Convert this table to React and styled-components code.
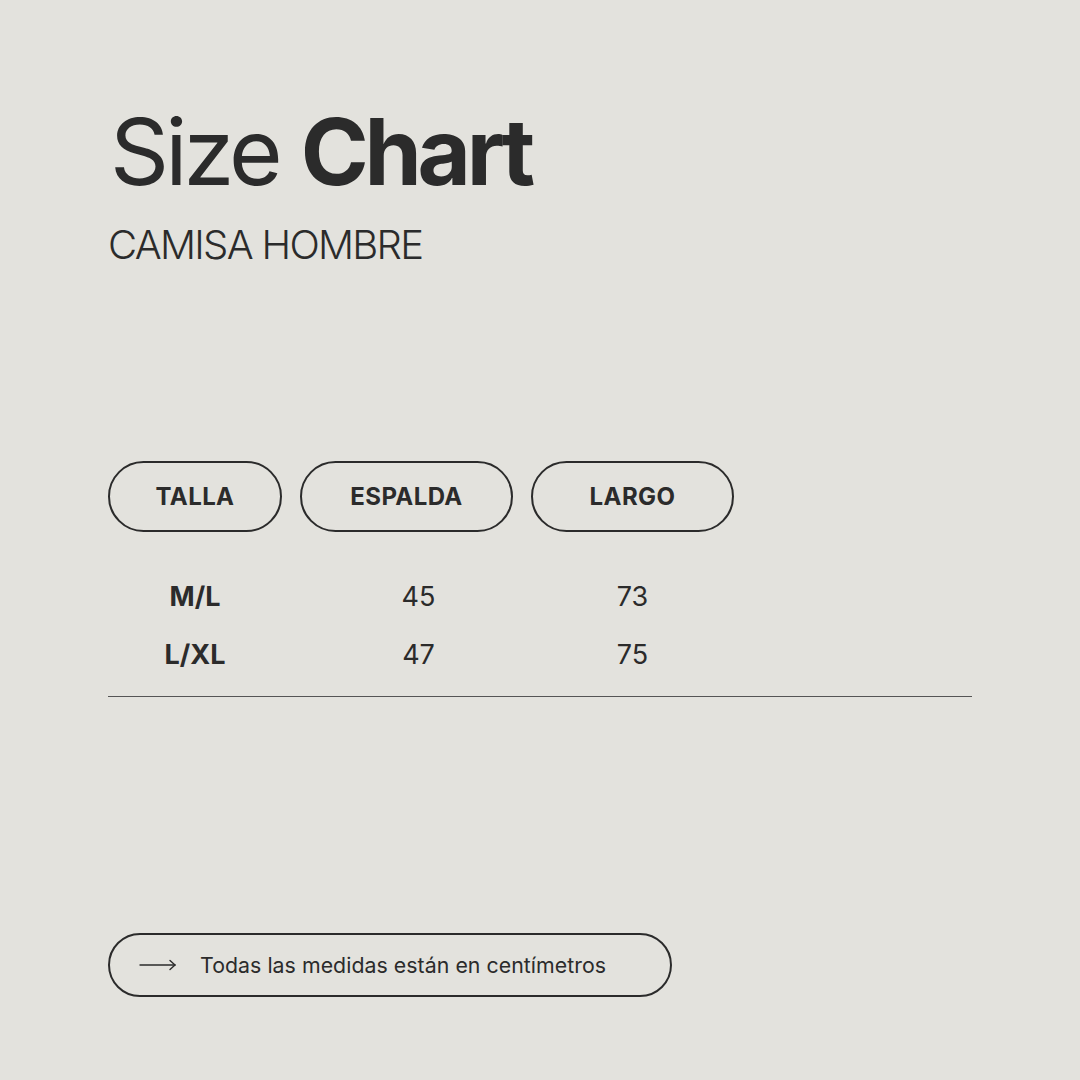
import React from "react";
import styled, { createGlobalStyle } from "styled-components";

const Global = createGlobalStyle`
  html, body { margin: 0; padding: 0; background: #e3e2dd; }
  body { font-family: Inter, "Noto Sans", "Liberation Sans", sans-serif; color: #2b2b2b; }
`;

const Page = styled.div`
  width: 1080px;
  height: 1080px;
  box-sizing: border-box;
  padding: 100px 108px 83px 108px;
  display: flex;
  flex-direction: column;
  background: #e3e2dd;
`;

const Title = styled.h1`
  margin: 0;
  font-size: 92px;
  line-height: 104px;
  font-weight: 400;
  letter-spacing: -3.9px;
  margin-left: 2px;
  b { font-weight: 700; letter-spacing: -4.3px; }
`;

const Subtitle = styled.h2`
  margin: 17px 0 0 0;
  font-size: 40px;
  line-height: 48px;
  font-weight: 300;
  letter-spacing: -1.7px;
`;

const Table = styled.div`
  margin-top: 192px;
  display: flex;
  flex-direction: column;
`;

const Row = styled.div`
  display: grid;
  grid-template-columns: 174px 213px 203px;
  column-gap: 18px;
  align-items: center;
  height: ${p => p.$h}px;
`;

const Pill = styled.div`
  height: 71px;
  box-sizing: border-box;
  border: 2px solid #2b2b2b;
  border-radius: 36px;
  display: flex;
  align-items: center;
  justify-content: center;
  font-size: 24px;
  font-weight: 700;
  letter-spacing: 0.4px;
`;

const Cell = styled.div`
  text-align: center;
  font-size: 27px;
  font-weight: ${p => (p.$bold ? 700 : 400)};
  padding-left: ${p => p.$shift || 0}px;
`;

const Body = styled.div`
  margin-top: 35px;
  display: flex;
  flex-direction: column;
`;

const Divider = styled.hr`
  margin: 13px 0 0 0;
  border: none;
  border-top: 1px solid #555;
  width: 864px;
`;

const Spacer = styled.div`
  flex: 1;
`;

const Note = styled.div`
  width: 564px;
  height: 64px;
  box-sizing: border-box;
  border: 2px solid #2b2b2b;
  border-radius: 32px;
  display: flex;
  align-items: center;
  padding-left: 29px;
  gap: 23px;
  font-size: 21.3px;
  font-weight: 400;
  letter-spacing: 0.05px;
`;

const rows = [
  ["M/L", "45", "73"],
  ["L/XL", "47", "75"],
];

export default function App() {
  return (
    <>
      <Global />
      <Page>
        <Title>Size <b>Chart</b></Title>
        <Subtitle>CAMISA HOMBRE</Subtitle>
        <Table>
          <Row $h={71}>
            <Pill>TALLA</Pill>
            <Pill>ESPALDA</Pill>
            <Pill>LARGO</Pill>
          </Row>
          <Body>
            {rows.map(r => (
              <Row key={r[0]} $h={58}>
                <Cell $bold>{r[0]}</Cell>
                <Cell $shift={24}>{r[1]}</Cell>
                <Cell>{r[2]}</Cell>
              </Row>
            ))}
          </Body>
          <Divider />
        </Table>
        <Spacer />
        <Note>
          <svg width="38" height="14" viewBox="0 0 38 14" fill="none" stroke="#2b2b2b" strokeWidth="1.4" strokeLinecap="round">
            <path d="M1 7H36" />
            <path d="M31 2.5L36 7L31 11.5" />
          </svg>
          <span>Todas las medidas están en centímetros</span>
        </Note>
      </Page>
    </>
  );
}
